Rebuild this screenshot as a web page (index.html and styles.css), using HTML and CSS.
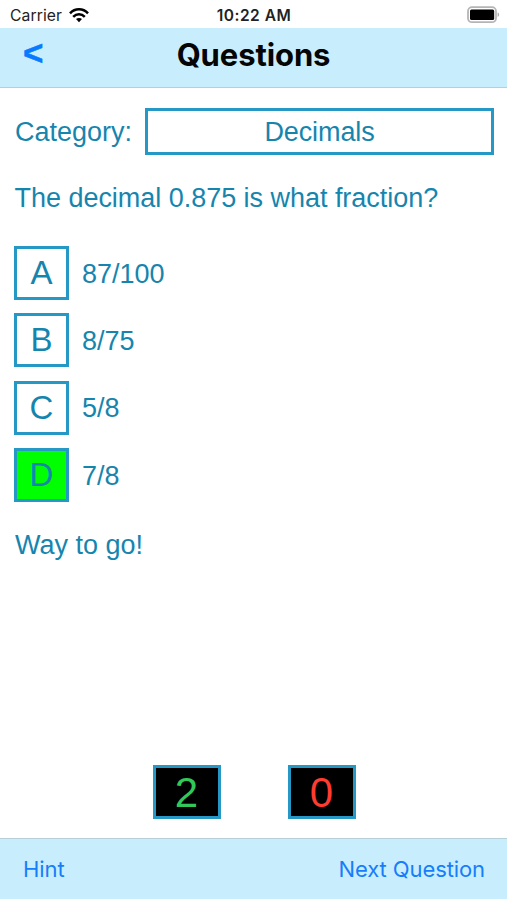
FILE: index.html
```html
<!DOCTYPE html>
<html lang="en">
<head>
<meta charset="utf-8">
<title>Questions</title>
<link rel="stylesheet" href="styles.css">
</head>
<body>
<div class="screen">
  <div class="status">
    <div class="carrier"><span class="carrier-name">Carrier</span>
      <svg class="wifi" width="20" height="15" viewBox="0 0 20 15" fill="none" stroke="#000" stroke-width="2.5"><path d="M1 5.3C6-.1 14-.1 19 5.3"/><path d="M4.2 8.8c3.3-3.4 8.3-3.4 11.6 0"/><path d="M7 11.1c1.8-1.6 4.2-1.6 6 0l-3 3.1z" fill="#000" stroke="none"/></svg>
    </div>
    <div class="time"><span>10:22 AM</span></div>
    <div class="power">
      <svg width="33" height="18" viewBox="0 0 33 18"><rect x="1" y="1.2" width="28" height="15" rx="4" fill="#fff" stroke="#b5b5b5" stroke-width="1.8"/><rect x="3" y="3.6" width="24.2" height="10.4" rx="1.5"/><path d="M30.6 6.6c2 .6 2 3.8 0 4.4z" fill="#aaa"/></svg>
    </div>
  </div>
  <header class="nav">
    <a class="back">&lt;</a>
    <h1 class="title"><span>Questions</span></h1>
    <span></span>
  </header>
  <main class="content">
    <div class="category"><span class="category-label">Category:</span><div class="category-value"><span>Decimals</span></div></div>
    <p class="question"><span>The decimal 0.875 is what fraction?</span></p>
    <div class="answers">
      <div class="answer"><span class="key">A</span><span class="text">87/100</span></div>
      <div class="answer"><span class="key">B</span><span class="text">8/75</span></div>
      <div class="answer"><span class="key">C</span><span class="text">5/8</span></div>
      <div class="answer"><span class="key correct">D</span><span class="text">7/8</span></div>
    </div>
    <p class="feedback"><span>Way to go!</span></p>
    <div class="scores"><span class="score right">2</span><span class="score wrong">0</span></div>
  </main>
  <footer class="toolbar"><a class="hint">Hint</a><a class="next">Next Question</a></footer>
</div>
</body>
</html>
```
FILE: styles.css
```css
* { box-sizing: border-box; }
body { margin: 0; background: #fff; }
.screen {
  width: 507px; height: 899px;
  display: flex; flex-direction: column;
  font-family: "Liberation Sans", Arial, sans-serif;
  color: #1685ae;
}
.status {
  height: 28px; padding: 0 7px 0 10px;
  display: grid; grid-template-columns: 1fr auto 1fr; align-items: center;
  font: 500 16px/28px Inter, sans-serif; color: #222;
}
.carrier { display: flex; align-items: center; gap: 7px; font-weight: 400; height: 28px; }
.carrier-name { font-size: 15.7px; letter-spacing: 0.1px; padding-top: 1px; }
.time { font-weight: 600; font-size: 15.5px; letter-spacing: 0.5px; padding-top: 2px; margin-left: -2px; }
.power { display: flex; justify-content: flex-end; }
.nav {
  height: 60px; padding: 0 23px 6px;
  display: grid; grid-template-columns: 1fr auto 1fr; align-items: center;
  background: #c8eefe; border-bottom: 1px solid #b9cfd8;
}
.back { font: 700 35px/50px "Liberation Sans", sans-serif; color: #087aff; padding-bottom: 5px; -webkit-text-stroke: 0.5px #087aff; }
.title { margin: 0; font: 700 31px/50px Inter, sans-serif; letter-spacing: -0.1px; color: #050505; padding-bottom: 2px; }
.content { flex: 1; display: flex; flex-direction: column; padding: 20px 13px 19px 14px; font-size: 27px; }
.category { display: flex; height: 47px; align-items: center; justify-content: space-between; }
.category-label { padding: 1px 0 0 1px; }
.category-value {
  width: 349px; height: 47px; border: 2.5px solid #1f93c1; border-width: 3px; border-color: #2598c5;
  display: flex; align-items: center; justify-content: center;
}
.category-value span { padding-top: 1px; letter-spacing: -0.1px; }
.question { margin: 27px 0 0; line-height: 32px; white-space: nowrap; padding-left: 0.5px; letter-spacing: -0.03px; }
.answers { margin-top: 32px; display: flex; flex-direction: column; gap: 13.4px; }
.answer { display: flex; align-items: center; gap: 13px; height: 54px; }
.text { padding-top: 2px; }
.key {
  width: 55px; height: 54px; border: 3px solid #2598c5;
  display: flex; align-items: center; justify-content: center; font-size: 33px;
}
.correct { background: #0f0; }
.feedback { margin: 27px 0 0; line-height: 32px; padding-left: 1px; }
.scores { margin-top: auto; display: flex; justify-content: center; gap: 67px; }
.score {
  width: 68px; height: 54px; border: 3px solid #2598c5; background: #000;
  display: flex; align-items: center; justify-content: center; font-size: 42px; padding-top: 2px;
}
.right { color: #32c759; }
.wrong { color: #ff3b30; }
.toolbar {
  height: 61px; padding: 0 22px 0 23px; background: #c8eefe; border-top: 1px solid #b9cfd8;
  display: flex; align-items: center; justify-content: space-between;
  font: 400 22px/61px Inter, sans-serif; letter-spacing: -0.1px; color: #177dfa;
}
```
